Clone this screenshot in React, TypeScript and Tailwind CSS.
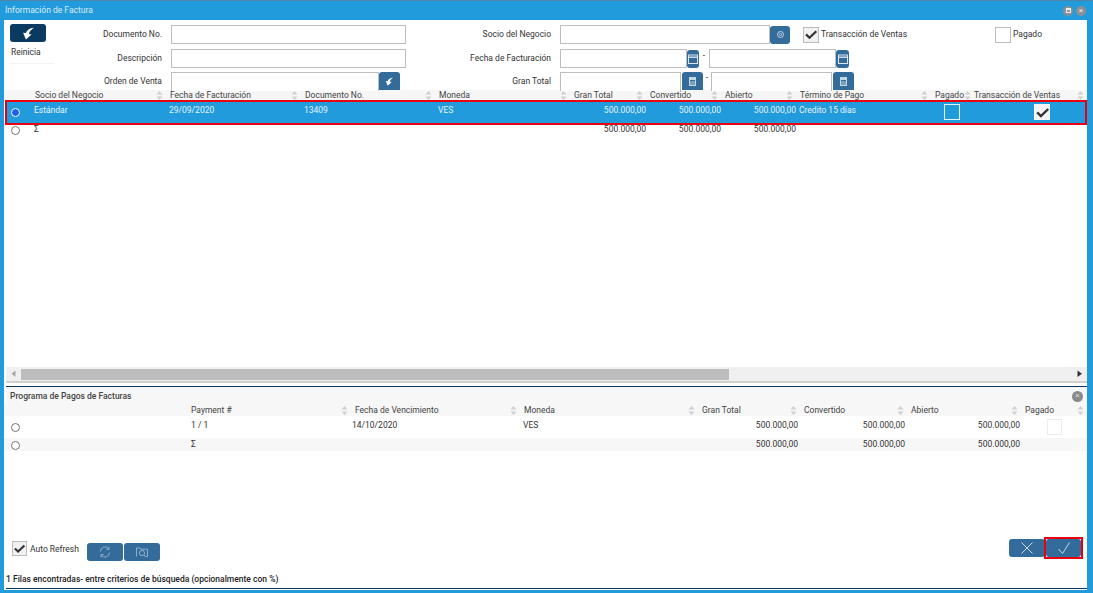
import React from "react";

function Sort({ className = "" }: { className?: string }) {
  return (
    <svg width="7" height="9" viewBox="0 0 7 9" className={"shrink-0 " + className}>
      <path d="M3.5 0 L6.5 3.4 H0.5 Z" fill="#cfcfcf" />
      <path d="M3.5 9 L6.5 5.6 H0.5 Z" fill="#cfcfcf" />
    </svg>
  );
}

function Radio({ selected = false }: { selected?: boolean }) {
  return selected ? (
    <span className="block w-[9px] h-[9px] rounded-full bg-[#1a5ff0] border border-white" />
  ) : (
    <span className="block w-[9px] h-[9px] rounded-full bg-white border border-[#767676]" />
  );
}

function Check({ size = 15 }: { size?: number }) {
  return (
    <svg width={size} height={size} viewBox="0 0 15 15">
      <path d="M2.2 7.4 L5.9 11 L13.2 4" fill="none" stroke="#333" strokeWidth="2.4" />
    </svg>
  );
}

function ReplyIcon({ size = 12 }: { size?: number }) {
  return (
    <svg width={size} height={size} viewBox="0 0 12 12">
      <path d="M11 0.6 C7 1 4.4 2.8 3.6 5.6 L1 5.4 L3.6 11.6 L8.8 7 L6.4 6.4 C6.8 4.2 8.4 2.2 11 0.6 Z" fill="#fff" />
    </svg>
  );
}

function CalendarIcon() {
  return (
    <svg width="10" height="10" viewBox="0 0 10 10" fill="none" stroke="#dbe6ef" strokeWidth="1">
      <rect x="0.5" y="1" width="9" height="8.5" />
      <path d="M0.5 3.2 H9.5" strokeWidth="1.4" />
    </svg>
  );
}

function CalcIcon() {
  return (
    <svg width="7" height="9" viewBox="0 0 7 9">
      <rect x="0.5" y="0.5" width="6" height="8" fill="none" stroke="#c8d6e2" />
      <rect x="1" y="1" width="5" height="2" fill="#c8d6e2" />
      <path d="M1 5 H6 M1 7 H6" stroke="#c8d6e2" />
    </svg>
  );
}

const inputCls = "block bg-white border border-[#bdbdbd] h-[19px]";
const btnCls = "flex items-center justify-center bg-[#336b9b] rounded-[3px]";

const topCols = "grid-cols-[27px_135px_135px_134px_135px_76px_75px_75px_135px_39px_117px]";
const lowCols = "grid-cols-[183px_164px_169px_178px_102px_107px_114px_66px]";

function H({ t }: { t: string }) {
  return (
    <div className="flex items-center justify-between pl-[4px] pr-[3px] overflow-hidden whitespace-nowrap">
      <span>{t}</span>
      <Sort />
    </div>
  );
}

export default function App() {
  const topHead = ["Socio del Negocio", "Fecha de Facturación", "Documento No.", "Moneda", "Gran Total", "Convertido", "Abierto", "Término de Pago", "Pagado", "Transacción de Ventas"];
  const lowHead = ["Payment #", "Fecha de Vencimiento", "Moneda", "Gran Total", "Convertido", "Abierto", "Pagado"];
  return (
    <div
      className="w-[1093px] h-[593px] overflow-hidden flex flex-col bg-[#229bdd] border-t border-t-[#4f86a8] text-[8.5px] leading-[11px] text-[#333]"
      style={{ fontFamily: 'Roboto, "Noto Sans", sans-serif' }}
    >
      {/* Title */}
      <div className="h-[19px] shrink-0 flex items-center justify-between pl-[5px] pr-[7px] text-[#d8edf9]">
        <span>Información de Factura</span>
        <div className="flex gap-[3px]">
          <span className="w-[10px] h-[10px] rounded-full bg-[#8b9094] flex items-center justify-center">
            <span className="block w-[5px] h-[5px] border border-[#eee] border-t-2" />
          </span>
          <span className="w-[10px] h-[10px] rounded-full bg-[#8b9094] flex items-center justify-center text-[#eee] text-[8px] leading-none">×</span>
        </div>
      </div>

      {/* Window body */}
      <div className="flex-1 min-h-0 ml-[4px] mr-[6px] mb-[3px] bg-white flex flex-col">
        {/* Search form */}
        <div className="h-[70px] shrink-0 flex relative">
          <div className="w-[88px] shrink-0 pl-[6px] pt-[4px]">
            <button className="w-[36px] h-[18px] rounded-[3px] bg-[#0a3a60] flex items-center justify-center">
              <ReplyIcon size={13} />
            </button>
            <div className="mt-[5px] pl-[1px] w-[44px] pb-[5px] border-b border-b-[#f3f3f3] text-[#333]">Reinicia</div>
          </div>
          <div className="flex-1 flex flex-col pt-[5px]">
            {/* Row 1 */}
            <div className="flex items-center h-[19px]">
              <span className="w-[70px] text-right">Documento No.</span>
              <span className={inputCls + " w-[235px] ml-[9px]"} />
              <span className="w-[145px] text-right">Socio del Negocio</span>
              <span className={inputCls + " w-[210px] ml-[9px]"} />
              <button className={btnCls + " w-[20px] h-[18px]"}>
                <span className="flex items-center justify-center w-[7px] h-[7px] rounded-full border border-[#c8d6e2]">
                  <span className="block w-[3px] h-[3px] rounded-full border border-[#c8d6e2]" />
                </span>
              </button>
              <span className="ml-[13px] w-[16px] h-[16px] bg-[#f1f1f1] border border-[#bdbdbd] flex items-center justify-center"><Check /></span>
              <span className="ml-[2px] w-[174px]">Transacción de Ventas</span>
              <span className="w-[16px] h-[16px] bg-white border border-[#bdbdbd]" />
              <span className="ml-[2px]">Pagado</span>
            </div>
            {/* Row 2 */}
            <div className="flex items-center h-[19px] mt-[5px]">
              <span className="w-[70px] text-right">Descripción</span>
              <span className={inputCls + " w-[235px] ml-[9px]"} />
              <span className="w-[145px] text-right">Fecha de Facturación</span>
              <span className={inputCls + " w-[127px] ml-[9px]"} />
              <button className={btnCls + " w-[12px] h-[18px]"}><CalendarIcon /></button>
              <span className="w-[10px] text-center -translate-y-[3px]">-</span>
              <span className={inputCls + " w-[127px]"} />
              <button className={btnCls + " w-[13px] h-[18px]"}><CalendarIcon /></button>
            </div>
            {/* Row 3 */}
            <div className="flex items-start h-[18px] mt-[4px]">
              <span className="w-[70px] text-right mt-[4px]">Orden de Venta</span>
              <span className={inputCls + " w-[208px] ml-[9px] h-[18px] border-b-0"} />
              <button className={btnCls + " w-[21px] h-[18px] rounded-b-none"}><ReplyIcon size={9} /></button>
              <span className="w-[6px]" />
              <span className="w-[145px] text-right mt-[4px]">Gran Total</span>
              <span className={inputCls + " w-[121px] ml-[9px] h-[18px] border-b-0"} />
              <button className={btnCls + " w-[21px] h-[18px] ml-[1px] rounded-b-none"}><CalcIcon /></button>
              <span className="w-[8px] text-center">-</span>
              <span className={inputCls + " w-[121px] h-[18px] border-b-0"} />
              <button className={btnCls + " w-[21px] h-[18px] ml-[1px] rounded-b-none"}><CalcIcon /></button>
            </div>
          </div>
        </div>

        {/* Upper grid */}
        <div className={"grid h-[11px] shrink-0 bg-[#f6f6f6] text-[#444] " + topCols}>
          <div />
          {topHead.map((t) => <H key={t} t={t} />)}
        </div>
        <div className="relative h-[21px] shrink-0 mt-[1px] bg-[#229bdd] text-[#e6f4fc] outline-2 outline-[#e60012] ml-[3px] mr-[2px]">
          <div className={"grid h-full -ml-[3px] -mr-[2px] " + topCols}>
            <div className="flex items-start justify-start pl-[7px] pt-[6px]"><Radio selected /></div>
            <div className="pl-[3px] pt-[3px]">Estándar</div>
            <div className="pl-[3px] pt-[3px]">29/09/2020</div>
            <div className="pl-[3px] pt-[3px]">13409</div>
            <div className="pl-[3px] pt-[3px]">VES</div>
            <div className="text-right pt-[3px]">500.000,00</div>
            <div className="text-right pt-[3px]">500.000,00</div>
            <div className="text-right pt-[3px]">500.000,00</div>
            <div className="pl-[3px] pt-[3px]">Credito 15 días</div>
            <div className="flex justify-center items-start pt-[2px] pl-[2px]"><span className="block w-[16px] h-[16px] border border-[#e6f4fc]" /></div>
            <div className="flex justify-start items-start pt-[2px] pl-[64px]"><span className="flex items-center justify-center w-[16px] h-[16px] bg-[#f5f5f5]"><Check /></span></div>
          </div>
        </div>
        <div className={"grid h-[14px] shrink-0 mt-[1px] " + topCols}>
          <div className="flex items-start justify-start pl-[7px] pt-[2px]"><Radio /></div>
          <div className="pl-[3px]">Σ</div>
          <div /><div /><div />
          <div className="text-right">500.000,00</div>
          <div className="text-right">500.000,00</div>
          <div className="text-right">500.000,00</div>
        </div>
        <div className="flex-1 min-h-0" />

        {/* Horizontal scrollbar */}
        <div className="h-[14px] shrink-0 ml-[2px] bg-[#f0f0f0] flex items-center">
          <svg width="15" height="14" viewBox="0 0 15 14" className="shrink-0"><path d="M9.5 3.5 V10 L5.5 6.8 Z" fill="#a8a8a8" /></svg>
          <div className="w-[708px] h-[11px] bg-[#bdbdbd]" />
          <div className="flex-1" />
          <svg width="15" height="14" viewBox="0 0 15 14" className="shrink-0"><path d="M5.5 3.5 V10 L10 6.8 Z" fill="#333" /></svg>
        </div>
        <div className="h-[2px] shrink-0 ml-[2px] bg-[#d2d0ca]" />

        {/* Lower panel */}
        <div className="h-[3px] shrink-0" />
        <div className="h-[1px] shrink-0 ml-[2px] bg-[#0a3a60]" />
        <div className="h-[17px] shrink-0 ml-[2px] bg-[#f7f7f7] flex items-center justify-between pl-[4px] pr-[4px] pt-[1px]">
          <span className="font-medium text-[#444]">Programa de Pagos de Facturas</span>
          <span className="w-[11px] h-[11px] rounded-full bg-[#8a8a8a] text-[#ddd] text-[8px] leading-[10px] text-center">×</span>
        </div>
        <div className={"grid h-[12px] shrink-0 bg-[#f7f7f7] text-[#444] " + lowCols}>
          <div />
          {lowHead.map((t) => <H key={t} t={t} />)}
        </div>
        <div className={"grid h-[22px] shrink-0 items-center " + lowCols}>
          <div className="pl-[7px] pt-[1px]"><Radio /></div>
          <div className="pl-[4px] -mt-[4px]">1 / 1</div>
          <div className="pl-[1px] -mt-[4px]">14/10/2020</div>
          <div className="pl-[3px] -mt-[4px]">VES</div>
          <div className="text-right -mt-[4px] pr-[2px]">500.000,00</div>
          <div className="text-right -mt-[4px] pr-[2px]">500.000,00</div>
          <div className="text-right -mt-[4px] pr-[1px]">500.000,00</div>
          <div className="pl-[26px] -mt-[1px]"><span className="block w-[15px] h-[16px] border border-[#ececec] bg-white" /></div>
        </div>
        <div className={"grid h-[13px] shrink-0 items-center bg-[#f7f7f7] " + lowCols}>
          <div className="pl-[7px] pt-[1px]"><Radio /></div>
          <div className="pl-[4px]">Σ</div>
          <div /><div />
          <div className="text-right pr-[2px]">500.000,00</div>
          <div className="text-right pr-[2px]">500.000,00</div>
          <div className="text-right pr-[1px]">500.000,00</div>
        </div>

        {/* Action area */}
        <div className="h-[121px] shrink-0 flex items-start justify-between pl-[8px] pr-[6px] pt-[88px]">
          <div className="flex items-start pt-[2px]">
            <span className="w-[15px] h-[15px] bg-[#f1f1f1] border border-[#bdbdbd] flex items-center justify-center"><Check /></span>
            <span className="ml-[3px] mt-[3px] w-[57px]">Auto Refresh</span>
            <button className={btnCls + " w-[36px] h-[18px] mt-[2px]"}>
              <svg width="12" height="12" viewBox="0 0 12 12" fill="none" stroke="#8eb0cb" strokeWidth="1">
                <path d="M1.5 5.5 A4.5 4.5 0 0 1 9.8 3 M10.5 6.5 A4.5 4.5 0 0 1 2.2 9" />
                <path d="M10 0.6 V3.4 H7.4 M2 11.4 V8.6 H4.6" />
              </svg>
            </button>
            <button className={btnCls + " w-[36px] h-[18px] mt-[2px] ml-[1px]"}>
              <svg width="12" height="11" viewBox="0 0 12 11" fill="none" stroke="#8eb0cb" strokeWidth="1">
                <path d="M0.5 9.5 V1 H4 L5 2.2 H11.5 V9.5 H9" />
                <circle cx="6" cy="6" r="2.6" />
                <path d="M8 8 L10 10.2" />
              </svg>
            </button>
          </div>
          <div className="flex gap-[1px]">
            <button className={btnCls + " w-[36px] h-[18px]"}>
              <svg width="14" height="14" viewBox="0 0 14 14" stroke="#c7d8e6" strokeWidth="1"><path d="M1.5 1.5 L12.5 12.5 M12.5 1.5 L1.5 12.5" /></svg>
            </button>
            <span className="block outline-2 outline-[#e60012]">
              <button className={btnCls + " w-[35px] h-[18px]"}>
                <svg width="14" height="14" viewBox="0 0 14 14" fill="none" stroke="#c7d8e6" strokeWidth="1"><path d="M1.5 8 L5.5 12.5 L12.5 1.5" /></svg>
              </button>
            </span>
          </div>
        </div>

        {/* Status */}
        <div className="shrink-0 h-[13px] pl-[2px] pt-[2px] font-medium text-[#222]">1 Filas encontradas- entre criterios de búsqueda (opcionalmente con %)</div>
        <div className="h-[1px] shrink-0 ml-[2px] mt-[3px] mb-[1px] bg-[#0a3a60]" />
      </div>
    </div>
  );
}
